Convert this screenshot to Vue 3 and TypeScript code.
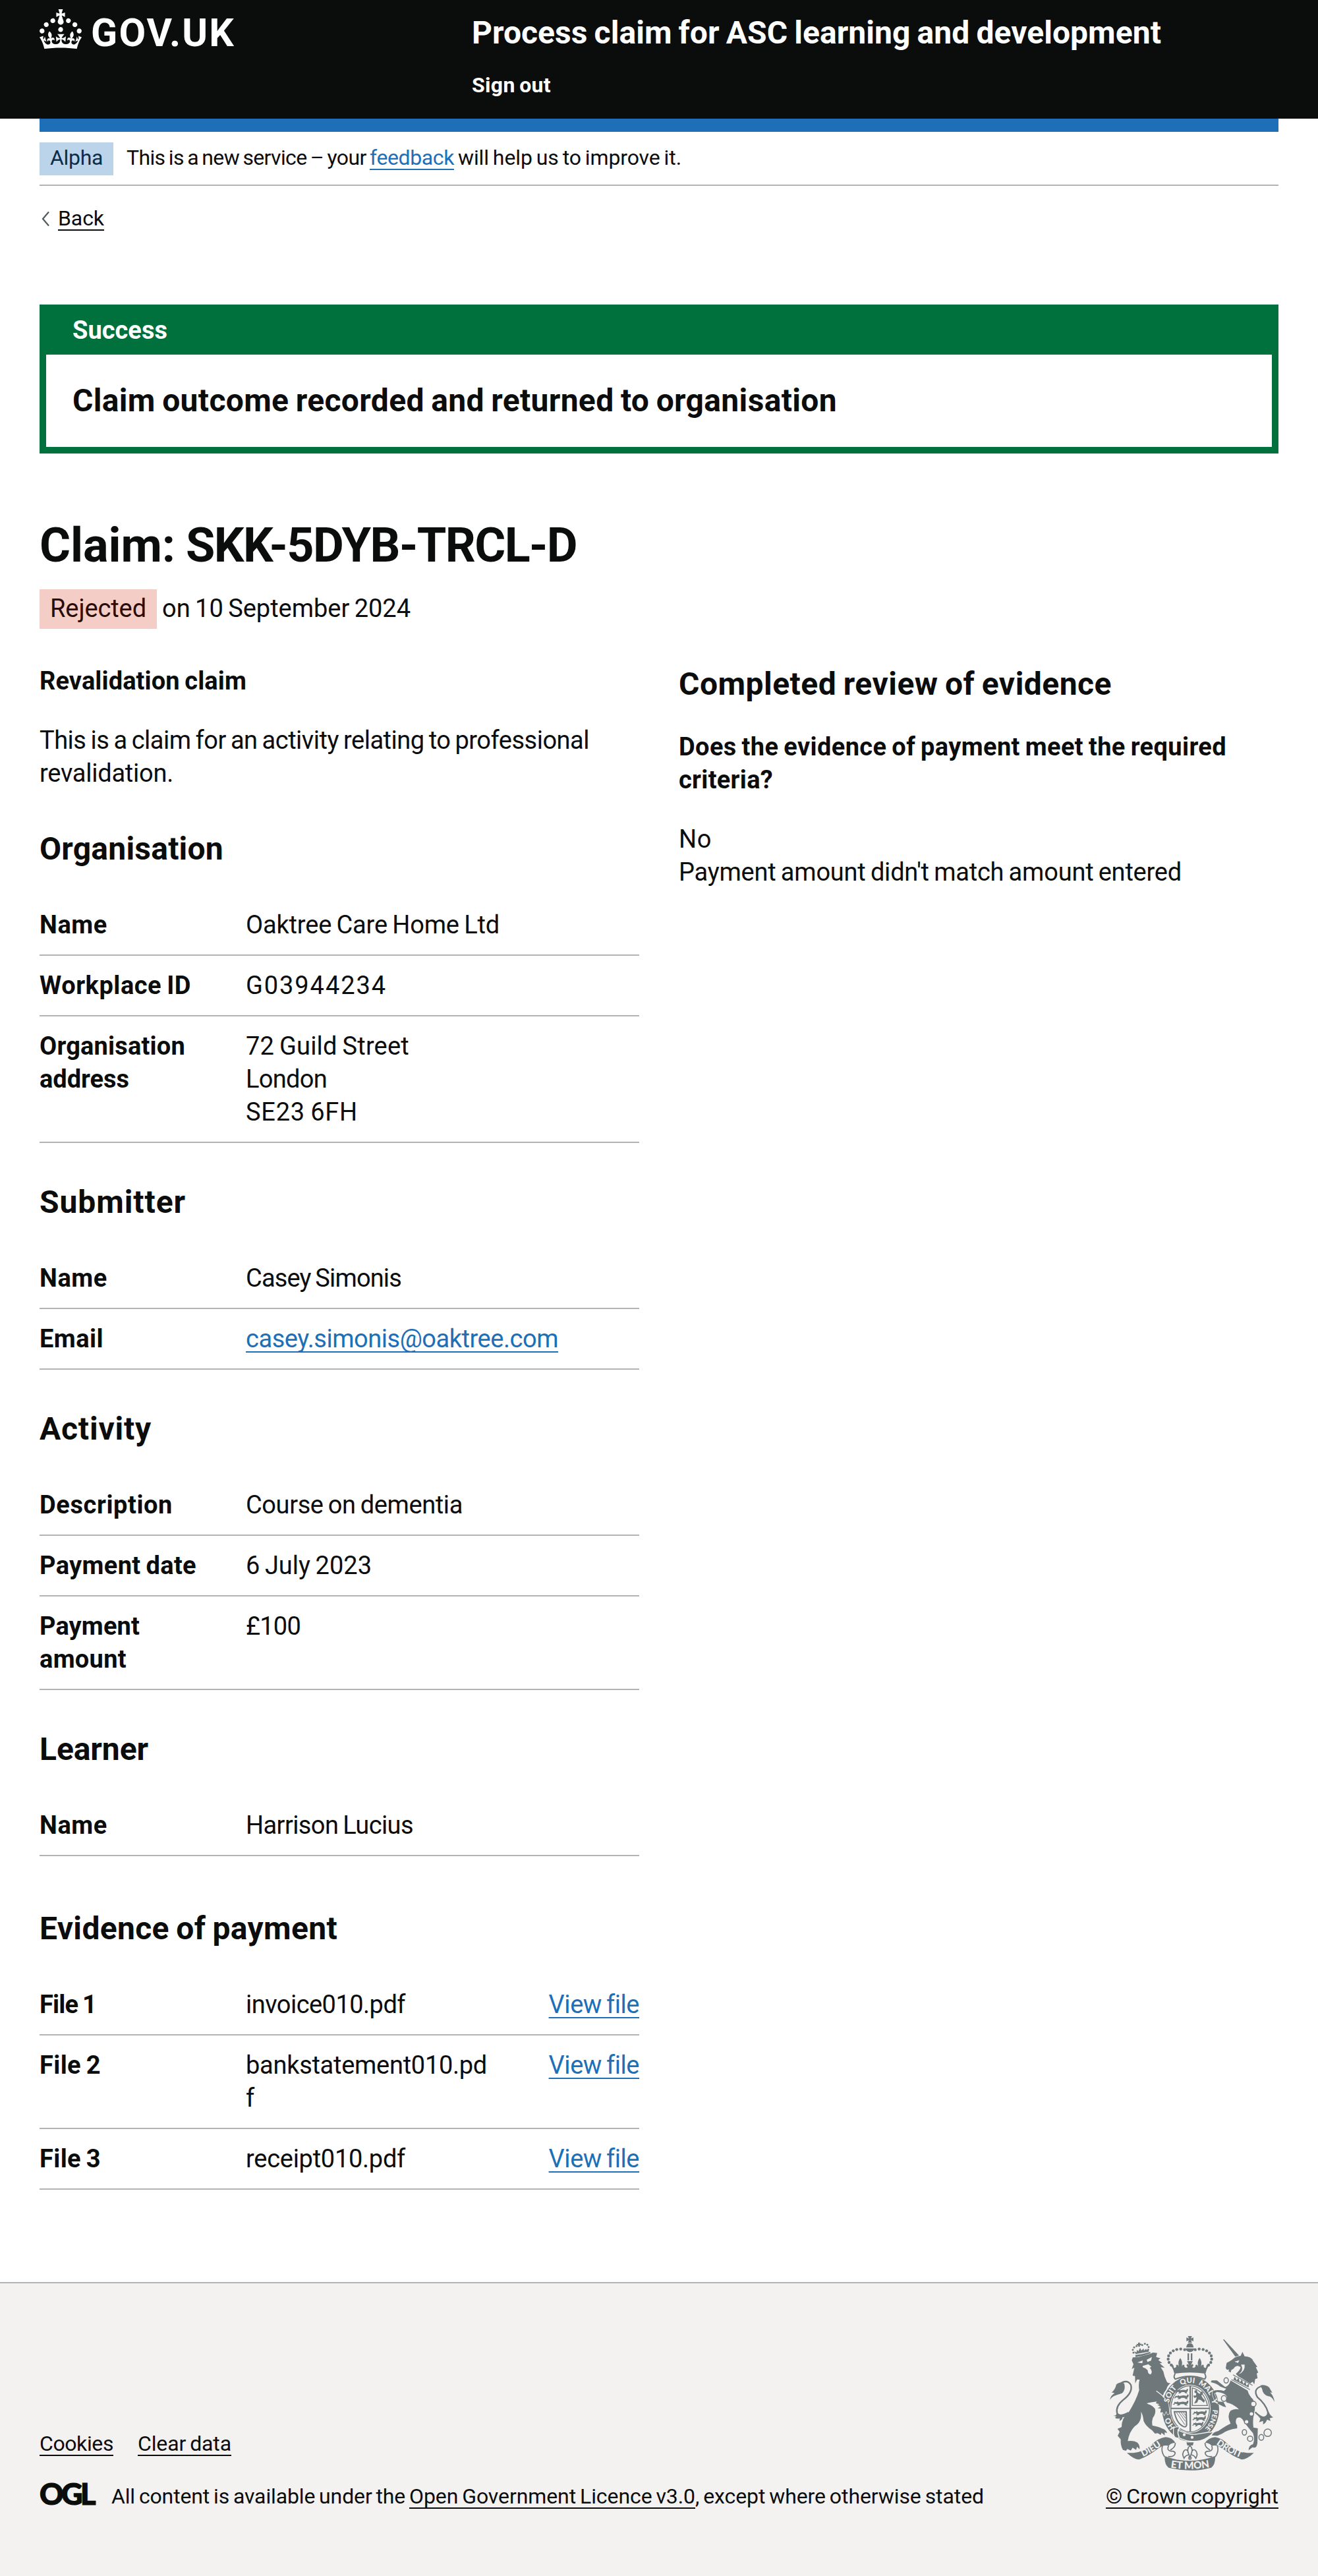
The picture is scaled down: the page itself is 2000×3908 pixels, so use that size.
<script setup lang="ts">
interface Line {
  text: string
  width: number
}

interface Row {
  key: Line[]
  value: Line[]
  link?: boolean
  action?: boolean
}

interface Section {
  title: Line
  rows: Row[]
  spaced?: boolean
}

const line = (text: string, width: number): Line => ({ text, width })

// Tracks a run of text so that it sets to the given measure in pixels.
const fit = (el: HTMLElement, width: number) => {
  el.style.letterSpacing = '0px'
  const natural = el.getBoundingClientRect().width
  const count = (el.textContent ?? '').length
  if (count > 0) el.style.letterSpacing = `${((width - natural) / count).toFixed(3)}px`
}

const vFit = {
  mounted: (el: HTMLElement, binding: { value: number }) => fit(el, binding.value),
}

const sections: Section[] = [
  {
    title: line('Organisation', 279),
    rows: [
      { key: [line('Name', 103)], value: [line('Oaktree Care Home Ltd', 385)] },
      { key: [line('Workplace ID', 230)], value: [line('G03944234', 214)] },
      {
        key: [line('Organisation', 221), line('address', 136)],
        value: [line('72 Guild Street', 248), line('London', 123), line('SE23 6FH', 170)],
      },
    ],
  },
  {
    title: line('Submitter', 222),
    rows: [
      { key: [line('Name', 103)], value: [line('Casey Simonis', 236)] },
      { key: [line('Email', 97)], value: [line('casey.simonis@oaktree.com', 474)], link: true },
    ],
  },
  {
    title: line('Activity', 170),
    rows: [
      { key: [line('Description', 202)], value: [line('Course on dementia', 329)] },
      { key: [line('Payment date', 238)], value: [line('6 July 2023', 191)] },
      { key: [line('Payment', 152), line('amount', 132)], value: [line('£100', 83)] },
    ],
  },
  {
    title: line('Learner', 165),
    rows: [{ key: [line('Name', 103)], value: [line('Harrison Lucius', 254)] }],
  },
  {
    title: line('Evidence of payment', 452),
    spaced: true,
    rows: [
      { key: [line('File 1', 86)], value: [line('invoice010.pdf', 242)], action: true },
      { key: [line('File 2', 93)], value: [line('bankstatement010.pd', 366), line('f', 13)], action: true },
      { key: [line('File 3', 93)], value: [line('receipt010.pdf', 242)], action: true },
    ],
  },
]

// Bead centres on the left arch of the royal crown; the right arch mirrors them about x = 437.
const beads: [number, number][] = [
  [413, 104], [395, 101], [377, 103], [361, 109], [348, 119], [340, 132], [338, 147], [342, 162], [352, 174],
]
const smallBeads: [number, number][] = [
  [180, 118], [177, 105], [183, 94], [194, 88], [220, 83], [232, 77], [243, 82], [249, 92], [247, 104],
]
const passant = 'M2 20 l6 -3 l2 -9 l8 2 l3 -5 l5 5 l16 -3 l14 2 l2 -7 l6 1 l-2 12 l-6 6 l6 5 l-10 -1 l-6 -6 l-12 0 l-6 6 l-10 1 l5 -6 l-9 -4 l-6 6 z'
</script>

<template>
  <div class="page">
    <header class="header">
      <div class="container header-inner">
        <a class="logo">
          <svg class="crown" viewBox="0 0 32 30" aria-hidden="true">
            <path
              fill="#fff"
              fill-rule="evenodd"
              d="M22.6 10.4c-1 .4-2-.1-2.4-1-.4-.9.1-2 1-2.4.9-.4 2 .1 2.4 1s-.1 2-1 2.4m-5.9 6.7c-.9.4-2-.1-2.4-1-.4-.9.1-2 1-2.4.9-.4 2 .1 2.4 1s-.1 2-1 2.4m10.8-3.7c-1 .4-2-.1-2.4-1-.4-.9.1-2 1-2.4.9-.4 2 .1 2.4 1s0 2-1 2.4m3.3 4.8c-1 .4-2-.1-2.4-1-.4-.9.1-2 1-2.4.9-.4 2 .1 2.4 1s-.1 2-1 2.4M17 4.7l2.3 1.2V2.5l-2.3.7-.2-.2.9-3h-3.4l.9 3-.2.2c-.1.1-2.3-.7-2.3-.7v3.4L15 4.7c.1.1.1.2.2.2l-1.3 4c-.1.2-.1.4-.1.6 0 1.1.8 2 1.9 2.2h.7c1-.2 1.9-1.1 1.9-2.1 0-.2 0-.4-.1-.6l-1.3-4c-.1-.2 0-.2.1-.3m-7.6 5.7c.9.4 2-.1 2.4-1 .4-.9-.1-2-1-2.4-.9-.4-2 .1-2.4 1s0 2 1 2.4m-5 3c.9.4 2-.1 2.4-1 .4-.9-.1-2-1-2.4-.9-.4-2 .1-2.4 1s.1 2 1 2.4m-3.2 4.8c.9.4 2-.1 2.4-1 .4-.9-.1-2-1-2.4-.9-.4-2 .1-2.4 1s0 2 1 2.4m14.8 11c4.4 0 8.6.3 12.3.8 1.1-4.5 2.4-7 3.7-8.8l-2.5-.9c.2 1.3.3 1.9 0 2.7-.4-.4-.8-1.1-1.1-2.3l-1.2 4c.7-.5 1.3-.8 2-.9-1.1 2.5-2.6 3.1-3.5 3-1.1-.2-1.7-1.2-1.5-2.1.3-1.2 1.5-1.5 2.1-.1 1.1-2.3-.8-3-2-2.3 1.9-1.9 2.1-3.5.6-5.6-2.1 1.6-2.1 3.2-1.2 5.5-1.2-1.4-3.2-.6-2.5 1.6.9-1.4 2.1-.5 1.9.8-.2 1.1-1.7 2.1-3.5 1.9-2.7-.2-2.9-2.1-2.9-3.6.7-.1 1.9.5 2.9 1.9l.4-4.3c-1.1 1.1-2.1 1.4-3.2 1.4.4-1.2 2.1-3 2.1-3h-5.4s1.7 1.9 2.1 3c-1.1 0-2.1-.2-3.2-1.4l.4 4.3c1-1.4 2.2-2 2.9-1.9-.1 1.5-.2 3.4-2.9 3.6-1.9.2-3.4-.8-3.5-1.9-.2-1.3 1-2.2 1.9-.8.7-2.3-1.2-3-2.5-1.6.9-2.2.9-3.9-1.2-5.5-1.5 2-1.3 3.7.6 5.6-1.2-.7-3.1 0-2 2.3.6-1.4 1.8-1.1 2.1.1.2.9-.3 1.9-1.5 2.1-.9.2-2.4-.5-3.5-3 .6 0 1.2.3 2 .9l-1.2-4c-.3 1.1-.7 1.9-1.1 2.3-.3-.8-.2-1.4 0-2.7l-2.9.9C1.3 23 2.6 25.5 3.7 30c3.7-.5 7.9-.8 12.3-.8"
            />
          </svg>
          <span v-fit="219" class="wordmark">GOV.UK</span>
        </a>
        <div class="header-content">
          <a class="service"><span v-fit="1046">Process claim for ASC learning and development</span></a>
          <a class="sign-out"><span v-fit="120">Sign out</span></a>
        </div>
      </div>
    </header>

    <div class="container">
      <div class="blue-bar"></div>
      <div class="phase">
        <strong class="phase-tag"><span v-fit="80">Alpha</span></strong>
        <span class="phase-text"><span v-fit="369">This is a new service – your&nbsp;</span><a v-fit="128" class="link">feedback</a><span v-fit="345">&nbsp;will help us to improve it.</span></span>
      </div>

      <a class="back">
        <svg class="chevron" viewBox="0 0 14 24" aria-hidden="true">
          <path d="M12 1.5 L3 12 L12 22.5" fill="none" stroke="#505a5f" stroke-width="2.2" />
        </svg>
        <span v-fit="70" class="plain-link">Back</span>
      </a>

      <main>
        <section class="banner">
          <h2 class="banner-title"><span v-fit="144">Success</span></h2>
          <div class="banner-body"><span v-fit="1160">Claim outcome recorded and returned to organisation</span></div>
        </section>

        <h1 class="claim-title"><span v-fit="222">Claim:&nbsp;</span><span v-fit="593">SKK-5DYB-TRCL-D</span></h1>
        <p class="status">
          <strong class="status-tag"><span v-fit="146">Rejected</span></strong>
          <span v-fit="377">on 10 September 2024</span>
        </p>

        <div class="columns">
          <div class="column">
            <h4 class="small-heading"><span v-fit="314">Revalidation claim</span></h4>
            <p class="intro">
              <span v-fit="834" class="row-line">This is a claim for an activity relating to professional</span>
              <span v-fit="203" class="row-line">revalidation.</span>
            </p>

            <section
              v-for="section in sections"
              :key="section.title.text"
              class="summary"
              :class="{ spaced: section.spaced }"
            >
              <h3 class="heading"><span v-fit="section.title.width">{{ section.title.text }}</span></h3>
              <dl class="list">
                <div v-for="(row, i) in section.rows" :key="i" class="row">
                  <dt class="key">
                    <span v-for="item in row.key" :key="item.text" v-fit="item.width" class="row-line">{{ item.text }}</span>
                  </dt>
                  <dd class="value">
                    <span
                      v-for="item in row.value"
                      :key="item.text"
                      v-fit="item.width"
                      class="row-line"
                      :class="{ link: row.link }"
                    >{{ item.text }}</span>
                  </dd>
                  <dd v-if="row.action" class="action"><a v-fit="136" class="link">View file</a></dd>
                </div>
              </dl>
            </section>
          </div>

          <div class="column">
            <h3 class="heading"><span v-fit="657">Completed review of evidence</span></h3>
            <h4 class="small-heading question">
              <span v-fit="831" class="row-line">Does the evidence of payment meet the required</span>
              <span v-fit="143" class="row-line">criteria?</span>
            </h4>
            <p class="intro">
              <span v-fit="50" class="row-line">No</span>
              <span v-fit="763" class="row-line">Payment amount didn't match amount entered</span>
            </p>
          </div>
        </div>
      </main>
    </div>

    <footer class="footer">
      <div class="container footer-inner">
        <div class="footer-meta">
          <nav class="footer-nav">
            <a v-fit="112" class="plain-link">Cookies</a>
            <a v-fit="142" class="plain-link">Clear data</a>
          </nav>
          <div class="licence">
            <span class="ogl"><span v-fit="82">OGL</span></span>
            <span class="licence-text"><span v-fit="452">All content is available under the&nbsp;</span><a v-fit="434" class="plain-link">Open Government Licence v3.0</a><span v-fit="438">, except where otherwise stated</span></span>
          </div>
        </div>

        <div class="copyright">
          <svg class="crest" viewBox="72 42 750 612" aria-hidden="true">
            <defs>
              <path id="garter" d="M440 491 A101 118 0 0 1 440 255 A101 118 0 0 1 440 491" />
              <path id="motto-left" d="M212 596 Q262 574 318 534" />
              <path id="motto-mid" d="M346 640 Q437 655 530 638" />
              <path id="motto-right" d="M552 531 Q604 571 672 597" />
            </defs>

            <g fill="#6e787b">
              <!-- royal crown -->
              <path d="M428 42 H446 L442 53 L453 48 V66 L442 61 L446 73 H428 L432 61 L421 66 V48 L432 53 Z" />
              <path d="M420 94 Q422 78 432 75 H442 Q452 78 454 94 Z M417 98 H457 Q455 112 437 115 Q419 112 417 98 Z" />
              <path d="M426 121 h7 v32 h-7z M441 121 h7 v32 h-7z" />
              <circle v-for="(b, i) in beads" :key="'l' + i" :cx="b[0]" :cy="b[1]" r="6.6" />
              <circle v-for="(b, i) in beads" :key="'r' + i" :cx="874 - b[0]" :cy="b[1]" r="6.6" />
              <path d="M366 213 L361 196 Q354 180 346 169 L361 174 L364 186 Q371 189 375 181 Q371 177 378 172 Q386 174 387 183 Q384 172 385 160 Q387 150 393 142 Q399 150 401 160 Q402 172 399 183 Q400 174 408 172 Q415 177 411 181 Q418 190 427 184 L421 176 L424 169 L432 173 L424 156 H450 L442 173 L450 169 L453 176 L447 184 Q456 190 463 181 Q459 177 466 172 Q474 174 475 183 Q472 172 473 160 Q475 150 481 142 Q487 150 489 160 Q490 172 487 183 Q488 174 496 172 Q503 177 499 181 Q503 189 510 186 L513 174 L528 169 Q520 180 513 196 L508 213 Q437 202 366 213 Z" />
              <path d="M370 213 Q360 228 370 238 Q437 212 504 238 Q514 228 504 213" fill="none" stroke="#6e787b" stroke-width="6" />

              <!-- garter and shield -->
              <ellipse cx="440" cy="374" rx="130" ry="148" />
              <ellipse cx="438" cy="373" rx="93" ry="110" fill="#f3f2f1" />
              <ellipse cx="438" cy="373" rx="88" ry="105" fill="none" stroke="#6e787b" stroke-width="4" />
              <path d="M435 268 h7 v208 h-7z M350 368 h176 v6 h-176z" />
              <g>
                <path :d="passant" transform="translate(366 280) scale(.98 .9)" />
                <path :d="passant" transform="translate(360 306) scale(1.12 .9)" />
                <path :d="passant" transform="translate(355 334) scale(1.18 .95)" />
                <path :d="passant" transform="translate(445 378) scale(1.08 .95)" />
                <path :d="passant" transform="translate(445 404) scale(1.02 .95)" />
                <path :d="passant" transform="translate(445 430) scale(.84 .9)" />
              </g>
              <path d="M448 278 Q502 292 517 358 H448 Z" fill="none" stroke="#6e787b" stroke-width="4" />
              <path d="M458 290 l10 -3 l4 12 l10 6 l8 -12 l8 8 l-9 12 l7 12 l10 10 l-6 10 l-14 -12 l-10 -2 l-6 14 l-14 4 l8 -16 l4 -12 l-12 2 l-4 -10 l12 0 l2 -10 l-8 -4z" />
              <path d="M366 386 H420 L422 446 Q420 458 408 454 Q376 440 366 386 Z" fill="none" stroke="#6e787b" stroke-width="6" />
              <path d="M376 390 L414 446 M386 388 L416 430 M396 388 L417 416 M406 388 L418 404" fill="none" stroke="#6e787b" stroke-width="3" />

              <!-- buckle -->
              <path d="M362 462 Q375 450 392 458 L382 470 Q437 495 470 488 L520 480 L545 478 Q520 508 484 518 Q430 528 388 505 Q365 510 362 488 Z" stroke="#f3f2f1" stroke-width="4" />
              <path d="M392 458 Q375 476 388 503" fill="none" stroke="#f3f2f1" stroke-width="5" />
              <circle cx="411" cy="491" r="6.5" fill="#f3f2f1" />
              <circle cx="447" cy="503" r="6.5" fill="#f3f2f1" />

              <!-- lion -->
              <g stroke="#f3f2f1" stroke-width="4" paint-order="stroke">
                <path d="M172 152 L177 139 Q205 140 230 130 Q255 124 268 117 L288 119 L283 137 L303 143 L293 151 L311 165 L299 166 L322 186 L304 184 L316 203 Q320 225 330 245 Q334 258 349 256 Q334 268 330 284 Q316 300 312 318 L336 340 Q342 362 343 396 L335 399 L329 383 L320 402 L312 388 L302 391 L305 372 L284 370 L300 360 L276 352 L262 345 Q250 344 242 350 Q268 356 278 372 Q284 395 268 414 Q262 432 266 449 Q296 454 308 462 Q328 466 333 484 L322 480 L322 494 L308 482 L304 492 L290 484 L278 486 L264 470 Q236 452 226 428 Q224 402 214 386 Q220 432 186 452 Q160 478 154 520 Q180 516 196 526 Q210 536 208 557 L196 546 L192 560 L176 550 L168 563 L152 556 L146 564 L132 560 Q120 540 122 512 L108 496 L117 478 L107 464 L126 456 Q126 414 156 392 Q190 340 206 288 Q202 262 208 240 L196 240 L188 258 L187 224 L176 222 L184 186 L172 192 L180 170 Z" />
              </g>
              <path d="M198 162 L222 153 L220 166 Z M240 150 L264 137 L260 154 L244 160 Z M222 178 L248 170 L262 182 L254 186 Q270 205 258 217 Q244 214 245 198 Q236 188 222 184 Z" fill="#f3f2f1" />
              <path d="M284 292 Q302 305 322 322" fill="none" stroke="#f3f2f1" stroke-width="4" />
              <path d="M240 348 Q268 342 286 340 L282 348 L298 352 L286 358 L304 364 L290 370 L304 378 L300 394 L278 372 Q262 354 240 348Z" fill="#f3f2f1" />
              <path d="M188 128 Q218 126 256 114 L258 120 Q226 132 190 138 Z" />
              <circle v-for="(b, i) in smallBeads" :key="'s' + i" :cx="b[0]" :cy="b[1]" r="4.4" />
              <path d="M201 72 l8 -1 l0 6 l6 -1 l1 7 l-7 1 l1 6 l-8 1 l-1 -7 l-6 1 l-1 -6 l7 -1z M190 124 L184 112 L194 116 L196 104 L202 112 L210 96 L216 108 L226 98 L228 108 L238 100 L240 106 L248 102 L250 113 Z" />
              <path d="M112 264 Q150 234 168 264 Q178 298 134 332 Q96 362 106 396 Q118 412 158 390" fill="none" stroke="#6e787b" stroke-width="7" />
              <path d="M72 332 Q78 310 94 302 Q84 298 80 300 Q98 284 102 262 Q118 248 138 258 Q146 286 128 302 Q104 310 92 314 Q80 320 72 332 Z" />
              <path d="M88 404 Q104 406 104 390 L118 400 Q140 404 152 396 Q146 412 130 412 Q130 424 116 428 L118 416 Q104 420 96 414 L102 408 Z" />

              <!-- unicorn -->
              <path d="M587 57 L593 58 L660 130 L648 142 Z" />
              <g stroke="#f3f2f1" stroke-width="4" paint-order="stroke">
                <path d="M600 188 L604 164 Q628 152 640 140 Q654 132 668 132 L676 114 L686 134 Q716 134 724 154 L744 182 L737 184 L748 208 L741 212 L745 234 L734 238 L730 262 L722 250 L712 258 Q690 246 676 236 Q656 228 646 214 Q664 200 668 184 Q654 172 642 182 Q634 194 626 196 L622 208 L612 202 L616 194 L606 196 Z" />
                <path d="M622 244 L700 290 Q704 310 724 330 Q740 358 728 396 Q722 430 726 458 L746 462 L744 530 Q740 556 722 548 L704 562 Q704 540 724 534 Q734 512 724 484 Q696 452 682 430 Q668 404 650 416 Q640 432 652 448 L652 462 Q612 466 584 486 L562 496 L536 494 Q544 478 566 474 Q600 450 622 440 Q604 404 622 382 Q640 370 660 376 Q636 350 604 344 Q596 336 606 318 Q598 300 560 296 L548 304 Q556 330 566 340 L590 342 L602 366 L588 362 L572 354 Q552 348 544 322 Q536 304 542 292 Q566 284 592 292 L602 282 L576 272 Q556 256 532 252 L536 244 L560 244 Q584 264 598 274 Q616 268 622 244 Z" />
              </g>
              <path d="M640 158 L662 152 L656 164 Z M670 172 Q684 200 658 216 Q690 204 686 172 Z" fill="#f3f2f1" />
              <path d="M632 217 L720 266 L710 288 L622 243 Z" fill="#f3f2f1" />
              <path d="M633 218 L722 266 M626 240 L710 286" fill="none" stroke="#6e787b" stroke-width="3.5" />
              <path d="M636 238 l5 -12 l9 18 l8 -12 l6 20 l10 -12 l6 20 l10 -12 l4 20 l12 -10 l-2 18 l-70 -36z" />
              <path d="M764 270 Q722 282 744 320 Q782 352 792 388 Q794 410 772 412 Q756 410 734 388" fill="none" stroke="#6e787b" stroke-width="7" />
              <path d="M758 266 Q782 262 798 276 L812 300 L802 298 Q820 318 822 342 Q810 316 794 316 Q768 308 766 284 Z" />
              <path d="M746 404 Q764 416 784 406 L796 388 Q802 404 816 412 L800 416 L804 428 L788 422 Q784 436 770 444 L770 428 L752 434 L758 418 Z" />
              <g fill="#f3f2f1" stroke="#6e787b" stroke-width="4.5">
                <ellipse cx="602" cy="244" rx="10" ry="12" />
                <ellipse cx="592" cy="326" rx="12" ry="13" />
                <circle cx="726" cy="351" r="12" />
                <circle cx="717" cy="396" r="10" />
                <circle cx="695" cy="432" r="10" />
                <ellipse cx="685" cy="480" rx="10" ry="13" fill="none" />
                <circle cx="711" cy="509" r="12" fill="none" />
                <ellipse cx="762" cy="503" rx="11" ry="13" fill="none" />
                <circle cx="791" cy="482" r="17" fill="none" />
              </g>

              <!-- motto ribbon -->
              <path d="M150 574 L180 574 Q228 568 262 536 Q294 506 326 502 Q358 504 370 528 Q350 528 340 542 Q318 534 290 556 Q246 590 206 604 Q182 604 150 574 Z" />
              <path d="M728 574 L698 574 Q648 568 612 536 Q582 506 552 502 Q520 506 506 528 Q526 528 536 542 Q558 534 588 556 Q632 590 672 604 Q696 604 728 574 Z" />
              <path d="M312 542 Q304 566 322 592 M552 592 Q570 566 562 542" fill="none" stroke="#6e787b" stroke-width="5" />
              <path d="M322 588 Q437 632 552 588 Q554 626 534 641 Q437 666 340 641 Q320 626 322 588 Z" />
              <path d="M340 542 Q330 562 350 566 Q366 564 370 574 Q366 594 338 590 M370 528 Q372 548 348 560 M536 542 Q544 562 526 566 Q510 564 506 574 Q510 594 538 590 M506 528 Q504 548 528 560" fill="none" stroke="#6e787b" stroke-width="5" />

              <!-- fleur-de-lis -->
              <path d="M421 526 H454 L450 540 H425 Z" />
              <path d="M437 540 Q420 556 432 580 L437 596 L442 580 Q454 556 437 540 Z M430 582 Q416 586 410 598 Q398 576 412 562 Q424 554 430 572 M444 582 Q458 586 464 598 Q476 576 462 562 Q450 554 444 572" fill="none" stroke="#6e787b" stroke-width="5" />
              <circle cx="437" cy="597" r="6" fill="none" stroke="#6e787b" stroke-width="4" />
            </g>

            <g fill="#f3f2f1" font-family="Lato, sans-serif" font-weight="900" font-size="34" text-anchor="middle">
              <text><textPath href="#garter" startOffset="15.5%">HO</textPath></text>
              <text><textPath href="#garter" startOffset="34.5%">SOIT</textPath></text>
              <text><textPath href="#garter" startOffset="48%">QUI</textPath></text>
              <text><textPath href="#garter" startOffset="60.5%">MAL</textPath></text>
              <text><textPath href="#garter" startOffset="70.5%">Y</textPath></text>
              <text font-size="31"><textPath href="#garter" startOffset="82.5%">PENSE</textPath></text>
              <text font-size="41"><textPath href="#motto-left" startOffset="50%">DIEU</textPath></text>
              <text font-size="46"><textPath href="#motto-mid" startOffset="50%">ET MON</textPath></text>
              <text font-size="41"><textPath href="#motto-right" startOffset="50%">DROIT</textPath></text>
            </g>
          </svg>
          <a v-fit="262" class="plain-link">© Crown copyright</a>
        </div>
      </div>
    </footer>
  </div>
</template>

<style>
body {
  background: #fff;
}
</style>

<style scoped>
.page {
  font-family: Roboto, "Liberation Sans", sans-serif;
  font-size: 38px;
  line-height: 50px;
  color: #0b0c0c;
  white-space: nowrap;
  word-spacing: -0.05em;
  text-decoration-skip-ink: none;
}

h1, h2, h3, h4, p, dl, dd, dt {
  margin: 0;
  font: inherit;
}

.container {
  margin: 0 60px;
}

.header {
  height: 180px;
  background: #0b0c0c;
  color: #fff;
}

.header-inner {
  display: flex;
}

.logo {
  display: flex;
  width: 656px;
  padding-top: 14px;
}

.crown {
  width: 64px;
  height: 60px;
}

.wordmark {
  margin-left: 14px;
  height: 60px;
  font-size: 59px;
  line-height: 71px;
  font-weight: 700;
}

.header-content {
  display: flex;
  flex-direction: column;
  padding-top: 20px;
}

.service {
  font-size: 48px;
  line-height: 60px;
  font-weight: 700;
}

.sign-out {
  margin-top: 29px;
  font-size: 32px;
  line-height: 40px;
  font-weight: 700;
}

.blue-bar {
  height: 20px;
  background: #1d70b8;
}

.phase {
  display: flex;
  padding: 16px 0 14px;
  border-bottom: 2px solid #b1b4b6;
  font-size: 32px;
  line-height: 40px;
}

.phase-tag {
  box-sizing: border-box;
  width: 112px;
  height: 50px;
  padding: 3px 0 0 16px;
  background: #bbd4ea;
  color: #0c2d4a;
  font-weight: 400;
}

.phase-text {
  padding: 3px 0 0 20px;
}

.link {
  color: #1d70b8;
}

.link,
.plain-link {
  text-decoration: underline;
  text-decoration-thickness: 2px;
  text-underline-offset: 6px;
}

.back {
  display: flex;
  margin-top: 29px;
  font-size: 32px;
  line-height: 40px;
}

.chevron {
  width: 14px;
  height: 24px;
  margin: 9px 12px 0 2px;
}

.banner {
  margin-top: 111px;
  border: 10px solid #00703c;
}

.banner-title {
  padding: 4px 40px 12px;
  background: #00703c;
  color: #fff;
  font-weight: 700;
}

.banner-body {
  padding: 40px;
  font-size: 48px;
  line-height: 60px;
  font-weight: 700;
}

.claim-title {
  margin-top: 100px;
  font-size: 72px;
  line-height: 80px;
  font-weight: 700;
}

.status {
  display: flex;
  margin-top: 26px;
  line-height: 58px;
}

.status-tag {
  box-sizing: border-box;
  width: 178px;
  height: 60px;
  margin-right: 8px;
  padding-left: 16px;
  background: #f4cdc6;
  color: #2a0b06;
  font-weight: 400;
}

.columns {
  display: grid;
  grid-template-columns: 910px 910px;
  gap: 60px;
  margin-top: 54px;
}

.small-heading {
  font-weight: 700;
}

.question {
  margin-top: 40px;
}

.intro {
  margin-top: 40px;
}

.row-line {
  display: table;
}

.heading {
  font-size: 48px;
  line-height: 60px;
  font-weight: 700;
}

.summary {
  margin-top: 60px;
}

.summary.spaced {
  margin-top: 80px;
}

.list {
  margin-top: 40px;
}

.row {
  display: flex;
  padding: 20px 0;
  border-bottom: 2px solid #b1b4b6;
}

.key {
  width: 313px;
  font-weight: 700;
}

.value {
  flex: 1;
}

.footer {
  box-sizing: border-box;
  height: 446px;
  margin-top: 140px;
  border-top: 2px solid #b1b4b6;
  background: #f3f2f1;
  font-size: 32px;
  line-height: 40px;
}

.footer-inner {
  display: flex;
  justify-content: space-between;
  align-items: flex-end;
  padding-top: 80px;
}

.footer-nav {
  display: flex;
  gap: 37px;
}

.licence {
  display: flex;
  margin-top: 40px;
}

.ogl {
  width: 83px;
  height: 40px;
  margin-right: 26px;
  font-family: Lato, sans-serif;
  font-size: 45px;
  font-weight: 900;
  line-height: 33px;
  -webkit-text-stroke: 1.2px #0b0c0c;
}

.copyright {
  display: flex;
  flex-direction: column;
  align-items: flex-end;
}

.crest {
  width: 250px;
  height: 204px;
  margin: 0 6px 19px 0;
}
</style>
